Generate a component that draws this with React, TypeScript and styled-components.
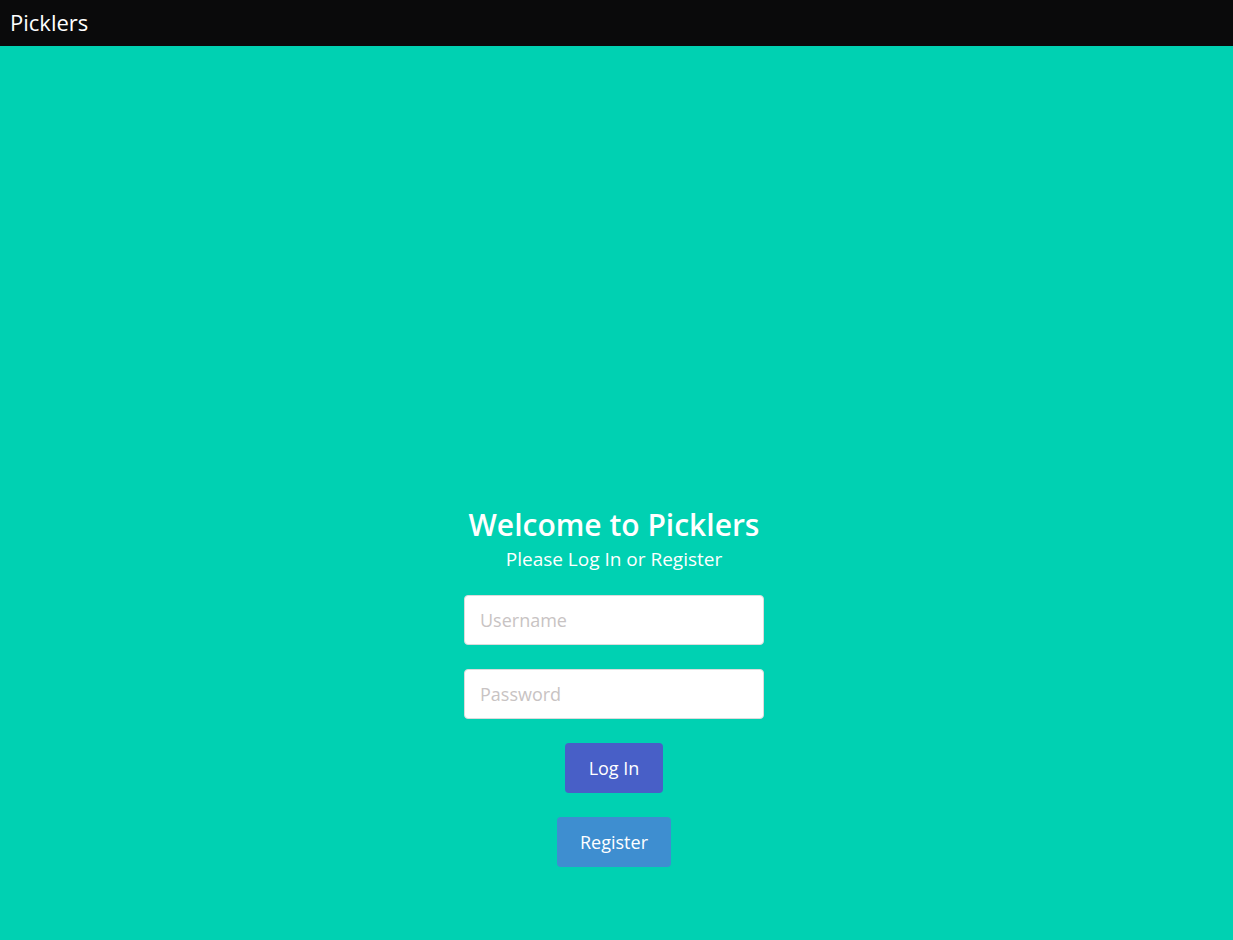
import React from "react";
import styled, { createGlobalStyle } from "styled-components";

const GlobalStyle = createGlobalStyle`
  html, body {
    margin: 0;
    padding: 0;
    background: #00d1b2;
    font-family: "Open Sans", "Noto Sans", sans-serif;
  }
  * {
    box-sizing: border-box;
  }
`;

const Page = styled.div`
  min-height: 940px;
  display: flex;
  flex-direction: column;
  background: #00d1b2;
`;

const NavBar = styled.nav`
  height: 46px;
  background: #0a0a0b;
  display: flex;
  align-items: center;
  padding-left: 10px;
`;

const Brand = styled.span`
  color: #ffffff;
  font-size: 22px;
  line-height: 1;
  padding-bottom: 2px;
`;

const Main = styled.main`
  flex: 1;
  display: flex;
  flex-direction: column;
  align-items: center;
  padding-top: 462px;
  padding-right: 5px;
`;

const Title = styled.h1`
  margin: 0;
  color: #ffffff;
  font-size: 30px;
  font-weight: 600;
  line-height: 1.125;
`;

const Subtitle = styled.h2`
  margin: 6px 0 0;
  color: #ffffff;
  font-size: 19px;
  font-weight: 400;
  line-height: 1.25;
`;

const Form = styled.form`
  margin-top: 23px;
  display: flex;
  flex-direction: column;
  align-items: center;
  gap: 24px;
`;

const Input = styled.input`
  width: 300px;
  height: 50px;
  padding: 0 15px;
  border: 1px solid #dbdbdb;
  border-radius: 4px;
  background: #ffffff;
  font-family: inherit;
  font-size: 18px;
  color: #363636;
  outline: none;
  &::placeholder {
    color: #c8c3c3;
  }
`;

const Button = styled.button<{ $tone: string; $width: number }>`
  width: ${(p) => p.$width}px;
  height: 50px;
  border: none;
  border-radius: 4px;
  background: ${(p) => p.$tone};
  color: #ffffff;
  font-family: inherit;
  font-size: 18px;
  cursor: pointer;
`;

export default function App() {
  return (
    <>
      <GlobalStyle />
      <Page>
        <NavBar>
          <Brand>Picklers</Brand>
        </NavBar>
        <Main>
          <Title>Welcome to Picklers</Title>
          <Subtitle>Please Log In or Register</Subtitle>
          <Form onSubmit={(e) => e.preventDefault()}>
            <Input type="text" placeholder="Username" />
            <Input type="password" placeholder="Password" />
            <Button type="submit" $tone="#485fc7" $width={98}>
              Log In
            </Button>
            <Button type="button" $tone="#3e8ed0" $width={114}>
              Register
            </Button>
          </Form>
        </Main>
      </Page>
    </>
  );
}
